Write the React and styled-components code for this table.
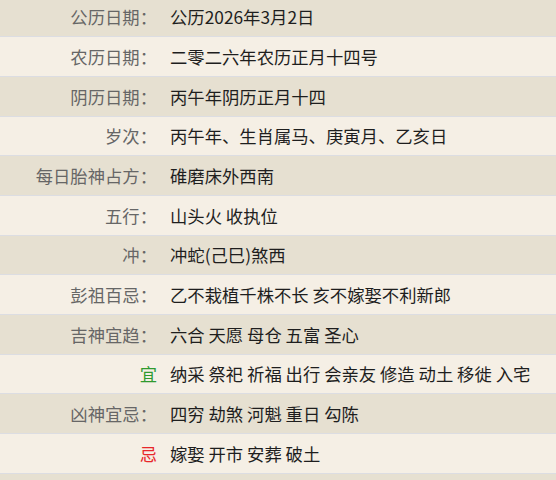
import React from "react";
import styled, { createGlobalStyle } from "styled-components";

const Global = createGlobalStyle`
  html, body { margin: 0; padding: 0; background: #f5efe5; }
  body { font-family: "Noto Sans CJK SC", "Noto Sans", sans-serif; overflow: hidden; }
`;

const Table = styled.div`
  display: flex;
  flex-direction: column;
  margin-top: -2.4px;
  width: 556px;
`;

const Row = styled.div`
  display: grid;
  grid-template-columns: 157px 1fr;
  column-gap: 13px;
  align-items: center;
  min-height: 25.5px;
  padding: 6.6px 0;
  border-bottom: 1px solid #dcdde2;
  background: ${(p) => (p.$alt ? "#e6e0d1" : "#f5efe5")};
  font-size: 13pt;
  line-height: 25.5px;
`;

const Label = styled.div`
  text-align: right;
  color: ${(p) => p.$color || "#666"};
  white-space: nowrap;
`;

const Value = styled.div`
  color: #1e1e1e;
  white-space: nowrap;
`;

const rows = [
  ["公历日期：", "公历2026年3月2日"],
  ["农历日期：", "二零二六年农历正月十四号"],
  ["阴历日期：", "丙午年阴历正月十四"],
  ["岁次：", "丙午年、生肖属马、庚寅月、乙亥日"],
  ["每日胎神占方：", "碓磨床外西南"],
  ["五行：", "山头火 收执位"],
  ["冲：", "冲蛇(己巳)煞西"],
  ["彭祖百忌：", "乙不栽植千株不长 亥不嫁娶不利新郎"],
  ["吉神宜趋：", "六合 天愿 母仓 五富 圣心"],
  ["宜", "纳采 祭祀 祈福 出行 会亲友 修造 动土 移徙 入宅", "#2f9a2f"],
  ["凶神宜忌：", "四穷 劫煞 河魁 重日 勾陈"],
  ["忌", "嫁娶 开市 安葬 破土", "#e8262a"],
];

export default function App() {
  return (
    <>
      <Global />
      <Table>
        {rows.map(([l, v, c], i) => (
          <Row key={i} $alt={i % 2 === 0}>
            <Label $color={c}>{l}</Label>
            <Value>{v}</Value>
          </Row>
        ))}
        <Row $alt />
      </Table>
    </>
  );
}
